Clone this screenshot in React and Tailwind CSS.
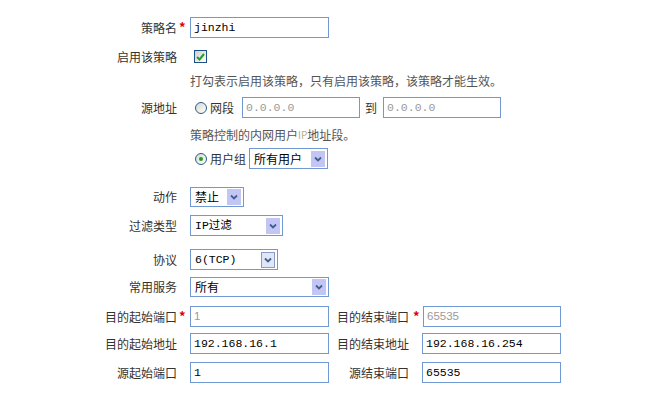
import React from "react";

const CJK = { fontFamily: '"Noto Sans CJK SC", "Noto Sans", sans-serif' };

function Label({ children, star, w = "w-[177px]", starGap = "ml-[2px]" }) {
  return (
    <div className={`relative ${w} shrink-0 text-right text-[12px] leading-[14px] text-[#333]`}>
      {children}
      {star && (
        <span className={`absolute left-full top-[-1px] ${starGap} text-[13px] font-bold text-[#e00000]`}>*</span>
      )}
    </div>
  );
}

function TextInput({ value, gray, w = "w-[139px]", h = "h-[21px]", mono = true }) {
  return (
    <div
      className={`${w} ${h} shrink-0 border border-[#7099d4] bg-white flex items-center pl-[3px] text-[11.5px] ${gray ? "text-[#9a9a9a]" : "text-black"}`}
      style={{ fontFamily: mono ? '"Liberation Mono", monospace' : '"Liberation Sans", sans-serif' }}
    >
      {value}
    </div>
  );
}

function Arrow({ alt }) {
  return (
    <div
      className={`w-[14px] h-[16px] mr-[2px] shrink-0 flex items-center justify-center ${alt ? "bg-[#dfe6f6] border border-[#8a9cc6]" : "bg-[#c3c6f5]"}`}
    >
      <svg width="8" height="6" viewBox="0 0 8 6">
        <path d="M1 1.5 L4 4.5 L7 1.5" fill="none" stroke="#3f5f8f" strokeWidth="1.8" />
      </svg>
    </div>
  );
}

function Select({ value, w, h = "h-[21px]", mono, alt }) {
  return (
    <div className={`${w} ${h} shrink-0 border border-[#7099d4] bg-white flex items-center justify-between`}>
      <span
        className="pl-[4px] text-[12px] leading-[14px] text-black"
        style={mono ? { fontFamily: '"Liberation Mono", "Noto Sans CJK SC", monospace', fontSize: "11.5px" } : undefined}
      >
        {value}
      </span>
      <Arrow alt={alt} />
    </div>
  );
}

function Radio({ checked }) {
  return (
    <div className="w-[12px] h-[12px] rounded-full border border-[#2e5b8a] bg-gradient-to-br from-[#d8d8d0] to-white flex items-center justify-center shrink-0">
      {checked && <div className="w-[4px] h-[4px] rounded-full bg-[#20a020]" />}
    </div>
  );
}

function Checkbox() {
  return (
    <div className="w-[13px] h-[13px] border border-[#1e4f86] bg-gradient-to-br from-[#cfcfcf] to-white flex items-center justify-center">
      <svg width="9" height="8" viewBox="0 0 9 8">
        <path d="M1 4 L3.5 6.5 L8 1" fill="none" stroke="#21a121" strokeWidth="2" />
      </svg>
    </div>
  );
}

export default function App() {
  return (
    <div className="w-[653px] h-[393px] bg-white overflow-hidden flex flex-col" style={CJK}>
      {/* 策略名 */}
      <div className="mt-[17px] h-[21px] flex items-center gap-[13px]">
        <Label star>策略名</Label>
        <TextInput value="jinzhi" />
      </div>
      {/* 启用该策略 */}
      <div className="mt-[12px] h-[13px] flex items-center">
        <Label>启用该策略</Label>
        <div className="ml-[17px]">
          <Checkbox />
        </div>
      </div>
      {/* hint */}
      <div className="mt-[11px] h-[14px] flex items-center pl-[190px] text-[12px] leading-[14px] text-[#555]">
        打勾表示启用该策略，只有启用该策略，该策略才能生效。
      </div>
      {/* 源地址 */}
      <div className="mt-[9px] h-[21px] flex items-center">
        <Label>源地址</Label>
        <div className="ml-[18px]">
          <Radio />
        </div>
        <span className="ml-[3px] text-[12px] leading-[14px] text-[#333]">网段</span>
        <div className="ml-[8px]">
          <TextInput value="0.0.0.0" gray w="w-[118px]" />
        </div>
        <span className="ml-[5px] text-[12px] leading-[14px] text-[#333]">到</span>
        <div className="ml-[6px]">
          <TextInput value="0.0.0.0" gray w="w-[118px]" />
        </div>
      </div>
      {/* hint 2 */}
      <div className="mt-[10px] h-[14px] flex items-center pl-[190px] text-[12px] leading-[14px] text-[#555]">
        策略控制的内网用户<span className="text-[10px] text-[#b8b070]">IP</span>地址段。
      </div>
      {/* 用户组 */}
      <div className="mt-[6px] h-[21px] flex items-center">
        <div className="w-[195px] shrink-0" />
        <Radio checked />
        <span className="ml-[3px] text-[12px] leading-[14px] text-[#333]">用户组</span>
        <div className="ml-[3px]">
          <Select value="所有用户" w="w-[79px]" />
        </div>
      </div>
      {/* 动作 */}
      <div className="mt-[18px] h-[20px] flex items-center gap-[13px]">
        <Label>动作</Label>
        <Select value="禁止" w="w-[54px]" h="h-[20px]" />
      </div>
      {/* 过滤类型 */}
      <div className="mt-[8px] h-[21px] flex items-center gap-[13px]">
        <Label>过滤类型</Label>
        <Select value="IP过滤" w="w-[93px]" mono />
      </div>
      {/* 协议 */}
      <div className="mt-[13px] h-[21px] flex items-center gap-[13px]">
        <Label>协议</Label>
        <Select value="6(TCP)" w="w-[88px]" mono alt />
      </div>
      {/* 常用服务 */}
      <div className="mt-[7px] h-[20px] flex items-center gap-[13px]">
        <Label>常用服务</Label>
        <Select value="所有" w="w-[139px]" h="h-[20px]" />
      </div>
      {/* ports */}
      <div className="mt-[9px] h-[21px] flex items-center">
        <Label star>目的起始端口</Label>
        <div className="ml-[13px]">
          <TextInput value="1" gray mono={false} />
        </div>
        <Label star w="w-[80px]" starGap="ml-[4px]">目的结束端口</Label>
        <div className="ml-[14px]">
          <TextInput value="65535" gray mono={false} w="w-[138px]" />
        </div>
      </div>
      <div className="mt-[6px] h-[21px] flex items-center">
        <Label>目的起始地址</Label>
        <div className="ml-[13px]">
          <TextInput value="192.168.16.1" />
        </div>
        <Label w="w-[80px]">目的结束地址</Label>
        <div className="ml-[13px]">
          <TextInput value="192.168.16.254" />
        </div>
      </div>
      <div className="mt-[8px] h-[21px] flex items-center">
        <Label>源起始端口</Label>
        <div className="ml-[13px]">
          <TextInput value="1" />
        </div>
        <Label w="w-[80px]">源结束端口</Label>
        <div className="ml-[13px]">
          <TextInput value="65535" />
        </div>
      </div>
    </div>
  );
}
